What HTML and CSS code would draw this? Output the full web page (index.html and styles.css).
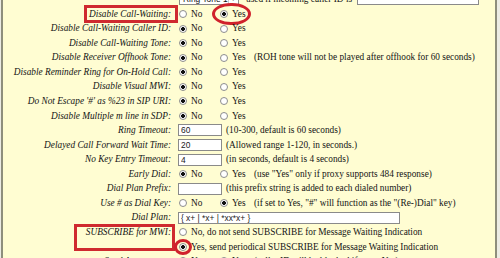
FILE: index.html
```html
<!DOCTYPE html>
<html lang="en">
<head>
  <meta charset="UTF-8" />
  <title>Account Settings</title>
  <link rel="stylesheet" href="styles.css">
</head>
<body>
  <div class="panel">

    <div class="row">
      <div class="lbl"></div>
      <div class="val">
        <span class="sel"><span class="sel-text">Ring Tone 1</span><span class="sel-btn">&#9660;</span></span>
        <span class="note gap7">used if incoming caller ID is</span>
        <input type="text" class="txt wide-top" />
      </div>
    </div>

    <div class="row">
      <div class="lbl"><span class="mark box-cw">Disable Call-Waiting:</span></div>
      <div class="val">
        <label class="opt no"><input type="radio" name="cw" />No</label>
        <label class="opt yes ellipse"><input type="radio" name="cw" checked />Yes</label>
      </div>
    </div>

    <div class="row">
      <div class="lbl">Disable Call-Waiting Caller ID:</div>
      <div class="val">
        <label class="opt no"><input type="radio" name="cwid" checked />No</label>
        <label class="opt yes"><input type="radio" name="cwid" />Yes</label>
      </div>
    </div>

    <div class="row">
      <div class="lbl">Disable Call-Waiting Tone:</div>
      <div class="val">
        <label class="opt no"><input type="radio" name="cwt" checked />No</label>
        <label class="opt yes"><input type="radio" name="cwt" />Yes</label>
      </div>
    </div>

    <div class="row">
      <div class="lbl">Disable Receiver Offhook Tone:</div>
      <div class="val">
        <label class="opt no"><input type="radio" name="roh" checked />No</label>
        <label class="opt yes"><input type="radio" name="roh" />Yes</label>
        <span class="note">(ROH tone will not be played after offhook for 60 seconds)</span>
      </div>
    </div>

    <div class="row">
      <div class="lbl">Disable Reminder Ring for On-Hold Call:</div>
      <div class="val">
        <label class="opt no"><input type="radio" name="rr" checked />No</label>
        <label class="opt yes"><input type="radio" name="rr" />Yes</label>
      </div>
    </div>

    <div class="row">
      <div class="lbl">Disable Visual MWI:</div>
      <div class="val">
        <label class="opt no"><input type="radio" name="vmwi" checked />No</label>
        <label class="opt yes"><input type="radio" name="vmwi" />Yes</label>
      </div>
    </div>

    <div class="row">
      <div class="lbl">Do Not Escape '#' as %23 in SIP URI:</div>
      <div class="val">
        <label class="opt no"><input type="radio" name="esc" checked />No</label>
        <label class="opt yes"><input type="radio" name="esc" />Yes</label>
      </div>
    </div>

    <div class="row">
      <div class="lbl">Disable Multiple m line in SDP:</div>
      <div class="val">
        <label class="opt no"><input type="radio" name="mline" checked />No</label>
        <label class="opt yes"><input type="radio" name="mline" />Yes</label>
      </div>
    </div>

    <div class="row">
      <div class="lbl">Ring Timeout:</div>
      <div class="val">
        <input type="text" class="txt" value="60" />
        <span class="note">(10-300, default is 60 seconds)</span>
      </div>
    </div>

    <div class="row">
      <div class="lbl">Delayed Call Forward Wait Time:</div>
      <div class="val">
        <input type="text" class="txt" value="20" />
        <span class="note">(Allowed range 1-120, in seconds.)</span>
      </div>
    </div>

    <div class="row">
      <div class="lbl">No Key Entry Timeout:</div>
      <div class="val">
        <input type="text" class="txt" value="4" />
        <span class="note">(in seconds, default is 4 seconds)</span>
      </div>
    </div>

    <div class="row">
      <div class="lbl">Early Dial:</div>
      <div class="val">
        <label class="opt no"><input type="radio" name="early" checked />No</label>
        <label class="opt yes"><input type="radio" name="early" />Yes</label>
        <span class="note">(use "Yes" only if proxy supports 484 response)</span>
      </div>
    </div>

    <div class="row">
      <div class="lbl">Dial Plan Prefix:</div>
      <div class="val">
        <input type="text" class="txt" />
        <span class="note">(this prefix string is added to each dialed number)</span>
      </div>
    </div>

    <div class="row">
      <div class="lbl">Use # as Dial Key:</div>
      <div class="val">
        <label class="opt no"><input type="radio" name="hash" />No</label>
        <label class="opt yes"><input type="radio" name="hash" checked />Yes</label>
        <span class="note">(if set to Yes, "#" will function as the "(Re-)Dial" key)</span>
      </div>
    </div>

    <div class="row">
      <div class="lbl">Dial Plan:</div>
      <div class="val">
        <input type="text" class="txt plan" value="{ x+ | *x+ | *xx*x+ }" />
      </div>
    </div>

    <div class="row">
      <div class="lbl"><span class="mark box-mwi">SUBSCRIBE for MWI:</span></div>
      <div class="val">
        <label class="opt"><input type="radio" name="mwi" />No, do not send SUBSCRIBE for Message Waiting Indication</label>
      </div>
    </div>

    <div class="row">
      <div class="lbl"></div>
      <div class="val">
        <label class="opt"><span class="ring"><input type="radio" name="mwi" checked /></span>Yes, send periodical SUBSCRIBE for Message Waiting Indication</label>
      </div>
    </div>

    <div class="row">
      <div class="lbl">Send Anonymous:</div>
      <div class="val">
        <label class="opt no"><input type="radio" name="anon" checked />No</label>
        <label class="opt yes"><input type="radio" name="anon" />Yes</label>
        <span class="note">(caller ID will be blocked if set to Yes)</span>
      </div>
    </div>

  </div>
</body>
</html>
```

FILE: styles.css
```css
body {
  margin: 0;
  background-color: #ecece4;
  font-family: 'Liberation Serif', 'Times New Roman', serif;
  font-size: 9.3px;
  color: #141414;
  overflow: hidden;
}

.panel {
  width: 492px;
  margin: -7.8px 0 0 1px;
  background-color: #fffdd2;
  border-left: 2px solid #8e8e7c;
  border-right: 2px solid #8e8e7c;
  padding-bottom: 20px;
}

.row {
  display: grid;
  grid-template-columns: 171px 1fr;
  height: 14.56px;
  align-items: center;
}

.lbl {
  text-align: right;
  font-style: italic;
  padding-right: 3px;
  line-height: 14.56px;
  white-space: nowrap;
}

.val {
  display: flex;
  align-items: center;
  padding-left: 4px;
  white-space: nowrap;
  line-height: 14.56px;
}

.opt {
  display: inline-flex;
  align-items: center;
  position: relative;
}

.opt.no { width: 41px; }
.opt.yes { width: 34px; }

input[type="radio"] {
  appearance: none;
  -webkit-appearance: none;
  width: 8px;
  height: 8px;
  margin: 0 4px 0 1px;
  border: 1px solid #8d8d8d;
  border-radius: 50%;
  background: #fff;
  box-sizing: border-box;
  flex-shrink: 0;
}

input[type="radio"]:checked {
  background: radial-gradient(circle, #111 0, #111 1.6px, #fff 2.2px);
}

.txt {
  width: 44px;
  height: 12px;
  box-sizing: border-box;
  border: 1px solid #8a8a8a;
  background: #fff;
  font-family: 'Liberation Sans', Arial, sans-serif;
  font-size: 8.4px;
  color: #222;
  padding: 0 2px;
  margin: 0 3px 0 0;
}

.txt.plan { width: 222px; }
.txt.wide-top { width: 122px; margin-left: 5px; }

.sel {
  display: inline-flex;
  align-items: center;
  width: 60px;
  height: 12px;
  box-sizing: border-box;
  border: 1px solid #8a8a8a;
  background: #fff;
  font-family: 'Liberation Sans', Arial, sans-serif;
  font-size: 8.4px;
  margin-left: 1px;
}

.sel-text {
  flex: 1;
  padding-left: 3px;
}

.sel-btn {
  width: 10px;
  height: 10px;
  font-size: 5px;
  line-height: 10px;
  text-align: center;
  border-left: 1px solid #c8c8c8;
  color: #333;
}

.note { margin-left: 1px; }
.gap7 { margin-left: 7px; }

.mark {
  position: relative;
  display: inline-block;
}

.mark::after,
.ellipse::after,
.ring::after {
  content: '';
  position: absolute;
  box-sizing: border-box;
}

.box-cw::after {
  left: -5px;
  right: -7px;
  top: -2px;
  bottom: -2px;
  border: 3px solid #cf2a2f;
}

.box-mwi::after {
  left: -12px;
  right: -4px;
  top: -1px;
  bottom: -11px;
  border: 3px solid #cf2a2f;
}

.ellipse::after {
  left: -7px;
  width: 39px;
  top: -4px;
  bottom: -4px;
  border: 3px solid #d0222c;
  border-radius: 50%;
}

.ring {
  position: relative;
  display: inline-flex;
}

.ring::after {
  left: -4px;
  top: -4px;
  width: 18px;
  height: 16px;
  border: 3px solid #d0222c;
  border-radius: 50%;
}
```
